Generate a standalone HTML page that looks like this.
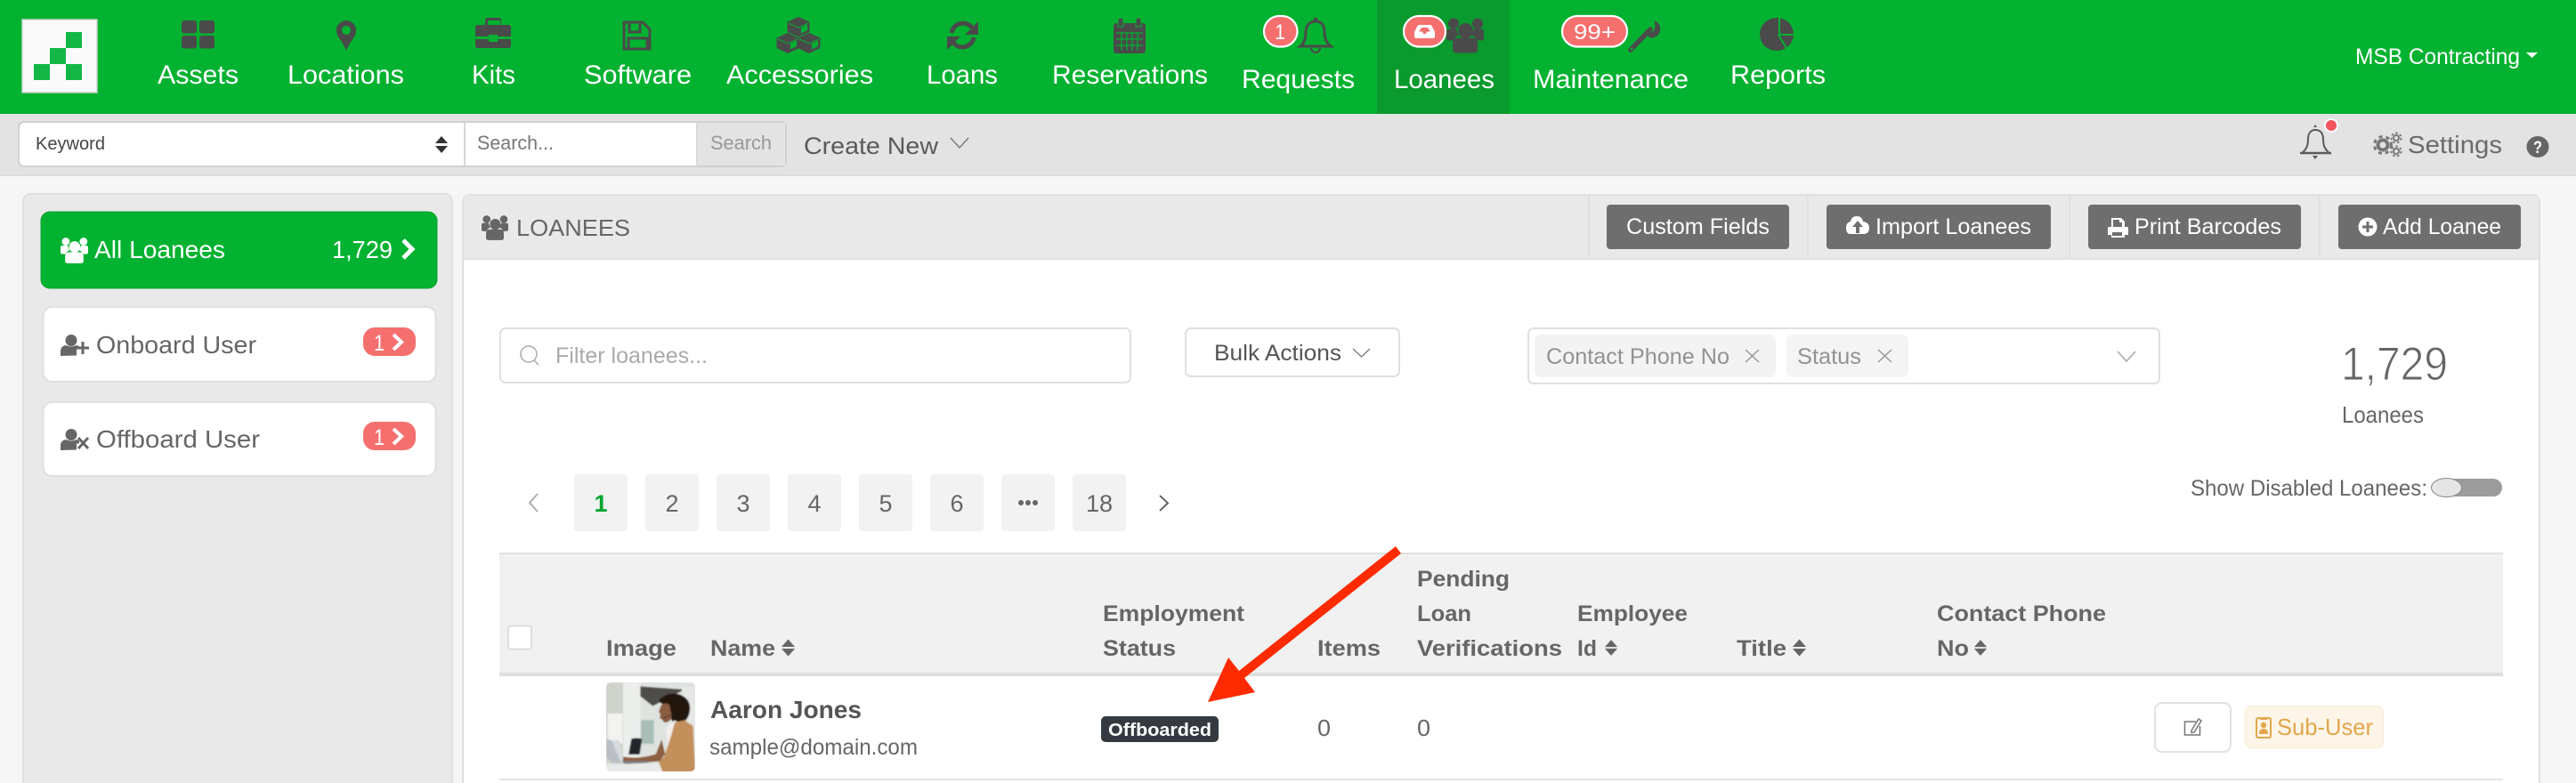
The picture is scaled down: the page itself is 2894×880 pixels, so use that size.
<!DOCTYPE html>
<html lang="en">
<head>
<meta charset="utf-8">
<title>Loanees</title>
<style>
html,body{margin:0;padding:0;width:2894px;height:880px;overflow:hidden;background:#f6f6f6}
svg{display:block}
text{font-family:"Liberation Sans",sans-serif}
.nav{fill:#fff;font-size:30px}
.th{fill:#666;font-size:25px;font-weight:bold}
.td{fill:#666;font-size:26px}
.btn{fill:#fff;font-size:25px}
.ic{fill:#4a4a4a}
.chev{fill:none;stroke:#777;stroke-width:1.4}
</style>
</head>
<body>
<svg xmlns="http://www.w3.org/2000/svg" width="2894" height="880" viewBox="0 0 2894 880">
<defs>
<symbol id="users" viewBox="0 0 42 39">
<circle cx="21.500" cy="14" r="8.500"/><circle cx="8" cy="6" r="6"/><circle cx="35" cy="6" r="6"/>
<path d="M0 15q0-3 3-3h8q1 4 3 7-5 2-6 6H3q-3 0-3-3zM42 15q0-3-3-3h-8q-1 4-3 7 5 2 6 6h5q3 0 3-3z"/>
<path d="M7 28q0-6 7-6h15q6 0 6 6v7q0 4-4 4H11q-4 0-4-4z"/>
</symbol>
<symbol id="sort" viewBox="0 0 18 20">
<path d="M9 0l8 9H1zM9 20L1 11h16z"/>
</symbol>
<symbol id="user" viewBox="0 0 32 24">
<circle cx="12" cy="6.500" r="6.500"/><path d="M0 24v-5q0-6 6-7 6 3 12 0 2 .5 3 1.500v3h-3v7z"/>
</symbol>
<clipPath id="ph"><rect x="15" y="15" width="300" height="300" rx="16"/></clipPath>
<filter id="bl"><feGaussianBlur stdDeviation="2"/></filter>
</defs>

<!-- page -->
<rect width="2894" height="880" fill="#f6f6f6"/>

<!-- top nav -->
<rect width="2894" height="128" fill="#02b230"/>
<rect x="1547" y="0" width="149" height="128" fill="#0a9a2e"/>

<rect x="25" y="22" width="84" height="82" fill="#fafafa" stroke="#c9d3c9" stroke-width="1.500"/>
<g fill="#14b746">
<rect x="74" y="36" width="18" height="18"/><rect x="56" y="54" width="18" height="18"/>
<rect x="38" y="72" width="18" height="18"/><rect x="74" y="72" width="18" height="18"/>
</g>

<!-- nav icons -->
<g class="ic">
<rect x="204" y="23" width="17" height="14.500" rx="3"/><rect x="224" y="23" width="17" height="14.500" rx="3"/>
<rect x="204" y="40" width="17" height="14.500" rx="3"/><rect x="224" y="40" width="17" height="14.500" rx="3"/>
<path fill-rule="evenodd" d="M389 57C385 46 378 42 378 34a11 11 0 0 1 22 0C400 42 393 46 389 57zM389 29a5 5 0 1 0 0 10 5 5 0 0 0 0-10z"/>
<path d="M534 31q0-3 3-3h8v-5q0-3 3-3h12q3 0 3 3v5h8q3 0 3 3v10h-15v-2h-10v2h-15zM548 23v5h14v-5zM534 44h15v3h10v-3h15v7q0 3-3 3h-34q-3 0-3-3z"/>
<path fill="none" stroke="#4a4a4a" stroke-width="3" d="M701 25h21l8 8v22h-29zM707 25v11h12V25M706 55V43h21v12"/>
<!-- cubes -->
<path d="M897 19l12.500 5.500v11.500l-12.500 5.500-12.500-5.500V24.500z"/>
<path d="M885 37l12 5.500 12-5.500 12.500 5.500v11.500L909 60l-12-5.500L885 60l-12.500-6V42.500z"/>
<path fill="#02b230" d="M900 31l7-3.500v6.500l-7 3.500zM888 49l7-3.500v6.500l-7 3.500zM912 49l7-3.500v6.500l-7 3.500z"/>
<path fill="none" stroke="#02b230" stroke-width="1" d="M886 26l11 5 11-5M874 44l11 5 11-5M898 44l11 5 11-5"/>
<!-- refresh -->
<path fill="none" stroke="#4a4a4a" stroke-width="5" d="M1069 37a13 13 0 0 1 23-6M1094 42a13 13 0 0 1-23 6"/>
<path d="M1099 24v15h-15zM1064 56V41h15z"/>
<!-- calendar -->
<rect x="1251" y="26" width="36" height="34" rx="3"/>
<path fill="#4a4a4a" stroke="#02b230" stroke-width="1" d="M1256 30v-7q0-3 3-3t3 3v7zM1276 30v-7q0-3 3-3t3 3v7z"/>
<path fill="none" stroke="#02b230" stroke-width="1.200" d="M1254 37h30M1254 44h30M1254 51h30M1260 37v20M1266 37v20M1272 37v20M1278 37v20"/>
<!-- bell -->
<path fill="none" stroke="#4a4a4a" stroke-width="3" d="M1461 52C1466 48 1467 42 1467 36C1467 28 1472 24 1478 24C1484 24 1488 28 1488 36C1488 42 1490 48 1495 52Z"/>
<circle cx="1478" cy="22" r="2.500"/><path fill="none" stroke="#4a4a4a" stroke-width="2" d="M1473 54a5 5 0 0 0 10 0"/>
<use href="#users" x="1625" y="20" width="42" height="40" fill="#4a4a4a"/>
<!-- wrench -->
<path fill="none" stroke="#4a4a4a" stroke-width="5.500" stroke-linecap="round" d="M1832 56l22-23"/>
<path d="M1858 23q8 3 7 11t-11 9l-5-6q6 1 9-3t0-11z"/>
<circle cx="1833" cy="55" r="1.300" fill="#02b230"/>
<!-- pie -->
<ellipse cx="1996" cy="38.500" rx="19" ry="18.500"/>
<path fill="none" stroke="#02b230" stroke-width="2" d="M1999 19v20h17M1998 39l10 17"/>
</g>

<!-- nav badges -->
<g fill="#f56f6f" stroke="#fff" stroke-width="2.200">
<rect x="1420" y="18" width="37.500" height="34.500" rx="17.200"/>
<rect x="1577" y="18" width="47" height="34.500" rx="17.200"/>
<rect x="1755" y="18" width="73" height="34.500" rx="17.200"/>
</g>
<text x="1432" y="44" fill="#fff" font-size="24" textLength="12" lengthAdjust="spacingAndGlyphs">1</text>
<path fill="#fff" fill-rule="evenodd" d="M1594 28h13q1 0 2 2l3 6v5q0 2-2 2h-19q-2 0-2-2v-5l3-6q1-2 2-2zM1597 31l-3 4.500h4l1 2.500h3l1-2.500h4l-3-4.500z"/>
<text x="1768" y="44" fill="#fff" font-size="24" textLength="47" lengthAdjust="spacingAndGlyphs">99+</text>

<!-- nav labels -->
<g class="nav">
<text x="177" y="94" textLength="91" lengthAdjust="spacingAndGlyphs">Assets</text>
<text x="323" y="94" textLength="131" lengthAdjust="spacingAndGlyphs">Locations</text>
<text x="530" y="94" textLength="49" lengthAdjust="spacingAndGlyphs">Kits</text>
<text x="656" y="94" textLength="121" lengthAdjust="spacingAndGlyphs">Software</text>
<text x="816" y="94" textLength="165" lengthAdjust="spacingAndGlyphs">Accessories</text>
<text x="1041" y="94" textLength="80" lengthAdjust="spacingAndGlyphs">Loans</text>
<text x="1182" y="94" textLength="175" lengthAdjust="spacingAndGlyphs">Reservations</text>
<text x="1395" y="99" textLength="127" lengthAdjust="spacingAndGlyphs">Requests</text>
<text x="1566" y="99" textLength="113" lengthAdjust="spacingAndGlyphs">Loanees</text>
<text x="1722" y="99" textLength="175" lengthAdjust="spacingAndGlyphs">Maintenance</text>
<text x="1944" y="94" textLength="107" lengthAdjust="spacingAndGlyphs">Reports</text>
</g>
<text x="2646" y="72" fill="#fff" font-size="25" textLength="185" lengthAdjust="spacingAndGlyphs">MSB Contracting</text>
<path fill="#fff" d="M2838 59h13l-6.500 6z"/>

<!-- toolbar -->
<rect y="128" width="2894" height="69" fill="#e3e3e3"/>
<rect y="196" width="2894" height="2" fill="#dcdcdc"/>
<rect x="21" y="137" width="862" height="50" rx="6" fill="#fff" stroke="#d0d0d0" stroke-width="2"/>
<rect x="784" y="138" width="98" height="48" fill="#e3e3e3"/>
<path stroke="#d4d8dc" stroke-width="2" d="M522 137v50M783 137v50"/>
<text x="40" y="168" fill="#444" font-size="20" textLength="78" lengthAdjust="spacingAndGlyphs">Keyword</text>
<path fill="#333" d="M496 153l7 8h-14zM496 172l-7-8h14z"/>
<text x="536" y="168" fill="#777" font-size="22" textLength="86" lengthAdjust="spacingAndGlyphs">Search...</text>
<text x="798" y="168" fill="#999" font-size="22" textLength="69" lengthAdjust="spacingAndGlyphs">Search</text>
<text x="903" y="173" fill="#5a5a5a" font-size="27" textLength="151" lengthAdjust="spacingAndGlyphs">Create New</text>
<path class="chev" d="M1068 155l10 11 10-11"/>

<path fill="none" stroke="#5a5a5a" stroke-width="2" d="M2587 171C2592 167 2593 162 2593 156C2593 149 2597 146 2601 146C2606 146 2610 149 2610 156C2610 162 2611 167 2616 171"/>
<path stroke="#5a5a5a" stroke-width="2.500" d="M2584 172h35"/>
<path fill="#5a5a5a" d="M2598 175h6l-3 4z"/><path fill="#5a5a5a" d="M2599 143l2-3 2 3z"/>
<circle cx="2619" cy="141" r="7" fill="#f2545b" stroke="#fff" stroke-width="2"/>
<g fill="none" stroke="#777">
<circle cx="2677" cy="163" r="5.500" stroke-width="4"/>
<circle cx="2677" cy="163" r="9.500" stroke-width="3" stroke-dasharray="4 4"/>
<circle cx="2692" cy="155" r="3" stroke-width="2"/>
<circle cx="2692" cy="155" r="5.500" stroke-width="2" stroke-dasharray="2.500 2.500"/>
<circle cx="2692" cy="170" r="3" stroke-width="2"/>
<circle cx="2692" cy="170" r="5.500" stroke-width="2" stroke-dasharray="2.500 2.500"/>
</g>
<text x="2705" y="172" fill="#6a6a6a" font-size="28" textLength="106" lengthAdjust="spacingAndGlyphs">Settings</text>
<ellipse cx="2851" cy="165" rx="12.500" ry="12" fill="#666"/>
<text x="2846" y="172" fill="#fff" font-size="19" font-weight="bold" textLength="10" lengthAdjust="spacingAndGlyphs">?</text>

<!-- sidebar -->
<rect x="26" y="218" width="482" height="700" rx="8" fill="#e9e9e9" stroke="#e0e0e0" stroke-width="2"/>
<rect x="46" y="238" width="445" height="86" rx="10" fill="#02b230" stroke="#0aa22f" stroke-width="1"/>
<rect x="48.500" y="345" width="441" height="84" rx="10" fill="#fff" stroke="#e0e0e0" stroke-width="2"/>
<rect x="48.500" y="452" width="441" height="83" rx="10" fill="#fff" stroke="#e0e0e0" stroke-width="2"/>
<use href="#users" x="68" y="267" width="31" height="29" fill="#fff"/>
<text x="106" y="290" fill="#fff" font-size="28" textLength="147" lengthAdjust="spacingAndGlyphs">All Loanees</text>
<text x="373" y="290" fill="#fff" font-size="28" textLength="68" lengthAdjust="spacingAndGlyphs">1,729</text>
<path fill="none" stroke="#fff" stroke-width="5" d="M453 270l10 10-10 10"/>

<use href="#user" x="68" y="376" width="32" height="24" fill="#666"/>
<path stroke="#666" stroke-width="3" d="M86 391h14M93 384v14"/>
<text x="108" y="397" fill="#666" font-size="28" textLength="180" lengthAdjust="spacingAndGlyphs">Onboard User</text>
<rect x="408" y="368" width="59" height="32" rx="13" fill="#f56f6f"/>
<text x="420" y="394" fill="#fff" font-size="25" textLength="12" lengthAdjust="spacingAndGlyphs">1</text>
<path fill="none" stroke="#fff" stroke-width="4" d="M442 376l9 8.500-9 8.500"/>

<use href="#user" x="68" y="482" width="32" height="24" fill="#666"/>
<path stroke="#666" stroke-width="3" d="M88 492l11 12M99 492l-11 12"/>
<text x="108" y="503" fill="#666" font-size="28" textLength="184" lengthAdjust="spacingAndGlyphs">Offboard User</text>
<rect x="408" y="474" width="59" height="32" rx="13" fill="#f56f6f"/>
<text x="420" y="500" fill="#fff" font-size="25" textLength="12" lengthAdjust="spacingAndGlyphs">1</text>
<path fill="none" stroke="#fff" stroke-width="4" d="M442 482l9 8.500-9 8.500"/>

<!-- main panel -->
<rect x="520" y="219" width="2333" height="700" rx="8" fill="#fff" stroke="#e0e0e0" stroke-width="2"/>
<path d="M521 291V227q0-7 7-7h2316q8 0 8 7v64z" fill="#e9e9e9"/>
<rect x="521" y="290" width="2331" height="2" fill="#e0e0e0"/>
<use href="#users" x="541" y="242" width="30" height="28" fill="#666"/>
<text x="580" y="265" fill="#666" font-size="26" textLength="128" lengthAdjust="spacingAndGlyphs">LOANEES</text>
<path stroke="#e0e0e0" stroke-width="2" d="M1785 220v70M2031 220v70M2325 220v70M2606 220v70"/>
<g fill="#6e6e6e">
<rect x="1805" y="230" width="205" height="50" rx="4"/>
<rect x="2052" y="230" width="252" height="50" rx="4"/>
<rect x="2346" y="230" width="239" height="50" rx="4"/>
<rect x="2627" y="230" width="205" height="50" rx="4"/>
</g>
<g class="btn">
<text x="1827" y="263" textLength="161" lengthAdjust="spacingAndGlyphs">Custom Fields</text>
<text x="2107" y="263" textLength="175" lengthAdjust="spacingAndGlyphs">Import Loanees</text>
<text x="2398" y="263" textLength="165" lengthAdjust="spacingAndGlyphs">Print Barcodes</text>
<text x="2677" y="263" textLength="133" lengthAdjust="spacingAndGlyphs">Add Loanee</text>
</g>
<path fill="#fff" d="M2074 256q0-6 5-7 1-6 7-6t7 6q7 1 7 7t-5 7h-16q-5 0-5-7z"/>
<path fill="#6e6e6e" d="M2087 248l6 7h-4v7h-4v-7h-4z"/>
<path fill="#fff" fill-rule="evenodd" d="M2372 245h11l4 4v6h3q1 0 1 1v8h-4v3h-15v-3h-4v-8q0-1 1-1h3zM2374 247v8h10v-5h-3v-3zM2373 261v4h11v-4z"/>
<circle cx="2660" cy="255" r="10.500" fill="#fff"/>
<path stroke="#6e6e6e" stroke-width="3" d="M2654 255h12M2660 249v12"/>

<!-- filter -->
<rect x="562" y="369" width="708" height="61" rx="6" fill="#fff" stroke="#e0e0e0" stroke-width="2"/>
<circle cx="594" cy="398" r="9" fill="none" stroke="#aaa" stroke-width="1.500"/>
<path stroke="#aaa" stroke-width="1.500" d="M600 405l5 5"/>
<text x="624" y="408" fill="#aaa" font-size="25" textLength="171" lengthAdjust="spacingAndGlyphs">Filter loanees...</text>

<rect x="1332" y="369" width="240" height="54" rx="6" fill="#fff" stroke="#e0e0e0" stroke-width="2"/>
<text x="1364" y="405" fill="#555" font-size="25" textLength="143" lengthAdjust="spacingAndGlyphs">Bulk Actions</text>
<path fill="none" stroke="#777" stroke-width="1.300" d="M1520 392l9.500 9 9.500-9"/>

<rect x="1717" y="369" width="709" height="62" rx="6" fill="#fff" stroke="#e0e0e0" stroke-width="2"/>
<rect x="1724" y="376" width="271" height="48" rx="7" fill="#f3f3f3"/>
<rect x="2007" y="376" width="137" height="48" rx="7" fill="#f3f4f3"/>
<text x="1737" y="409" fill="#929292" font-size="25" textLength="206" lengthAdjust="spacingAndGlyphs">Contact Phone No</text>
<path fill="none" stroke="#999" stroke-width="1.500" d="M1961 393l15 14M1976 393l-15 14"/>
<text x="2019" y="409" fill="#929292" font-size="25" textLength="72" lengthAdjust="spacingAndGlyphs">Status</text>
<path fill="none" stroke="#999" stroke-width="1.500" d="M2110 393l15 14M2125 393l-15 14"/>
<path fill="none" stroke="#aaa" stroke-width="1.600" d="M2379 395l10 11 10-11"/>

<text x="2630" y="427" fill="#666" stroke="#fff" stroke-width="1" font-size="53" textLength="120" lengthAdjust="spacingAndGlyphs">1,729</text>
<text x="2631" y="475" fill="#666" font-size="26" textLength="92" lengthAdjust="spacingAndGlyphs">Loanees</text>

<!-- pagination -->
<g fill="#f2f2f2">
<rect x="645" y="533" width="60" height="64" rx="4"/><rect x="725" y="533" width="60" height="64" rx="4"/>
<rect x="805" y="533" width="60" height="64" rx="4"/><rect x="885" y="533" width="60" height="64" rx="4"/>
<rect x="965" y="533" width="60" height="64" rx="4"/><rect x="1045" y="533" width="60" height="64" rx="4"/>
<rect x="1125" y="533" width="60" height="64" rx="4"/><rect x="1205" y="533" width="60" height="64" rx="4"/>
</g>
<path fill="none" stroke="#aaa" stroke-width="1.800" d="M604 555l-9 10 9 10"/>
<path fill="none" stroke="#555" stroke-width="1.800" d="M1303 557l9 8.500-9 8.500"/>
<g text-anchor="middle" fill="#666" font-size="27">
<text x="675" y="575" fill="#02a52e" font-weight="bold">1</text>
<text x="755" y="575">2</text><text x="835" y="575">3</text><text x="915" y="575">4</text><text x="995" y="575">5</text><text x="1075" y="575">6</text><text x="1235" y="575">18</text>
</g>
<g fill="#666"><circle cx="1147" cy="565" r="3"/><circle cx="1155" cy="565" r="3"/><circle cx="1163" cy="565" r="3"/></g>

<!-- toggle -->
<text x="2461" y="557" fill="#666" font-size="25" textLength="266" lengthAdjust="spacingAndGlyphs">Show Disabled Loanees:</text>
<rect x="2748" y="538" width="63" height="20" rx="10" fill="#9c9c9c"/>
<ellipse cx="2748.500" cy="548" rx="17" ry="10.500" fill="#e5e5e5" stroke="#888" stroke-width="1"/>

<!-- table -->
<rect x="561" y="621" width="2251" height="137" fill="#f1f1f1"/>
<rect x="561" y="621" width="2251" height="2" fill="#e0e0e0"/>
<rect x="561" y="756" width="2251" height="4" fill="#dedede"/>
<rect x="561" y="875" width="2251" height="2" fill="#e4e4e4"/>
<rect x="571" y="703.500" width="26" height="26" rx="3" fill="#fff" stroke="#ddd" stroke-width="2"/>
<g class="th">
<text x="681" y="737" textLength="79" lengthAdjust="spacingAndGlyphs">Image</text>
<text x="798" y="737" textLength="73" lengthAdjust="spacingAndGlyphs">Name</text>
<text x="1239" y="698" textLength="159" lengthAdjust="spacingAndGlyphs">Employment</text>
<text x="1239" y="737" textLength="82" lengthAdjust="spacingAndGlyphs">Status</text>
<text x="1480" y="737" textLength="71" lengthAdjust="spacingAndGlyphs">Items</text>
<text x="1592" y="659" textLength="104" lengthAdjust="spacingAndGlyphs">Pending</text>
<text x="1592" y="698" textLength="61" lengthAdjust="spacingAndGlyphs">Loan</text>
<text x="1592" y="737" textLength="163" lengthAdjust="spacingAndGlyphs">Verifications</text>
<text x="1772" y="698" textLength="124" lengthAdjust="spacingAndGlyphs">Employee</text>
<text x="1772" y="737" textLength="22" lengthAdjust="spacingAndGlyphs">Id</text>
<text x="1951" y="737" textLength="56" lengthAdjust="spacingAndGlyphs">Title</text>
<text x="2176" y="698" textLength="190" lengthAdjust="spacingAndGlyphs">Contact Phone</text>
<text x="2176" y="737" textLength="36" lengthAdjust="spacingAndGlyphs">No</text>
</g>
<g fill="#666">
<use href="#sort" x="877" y="718" width="17" height="20"/>
<use href="#sort" x="1802" y="718" width="16" height="20"/>
<use href="#sort" x="2013" y="718" width="17" height="20"/>
<use href="#sort" x="2217" y="718" width="16" height="20"/>
</g>

<!-- photo -->
<svg x="676" y="762" width="110" height="110" viewBox="0 0 330 330">
<g clip-path="url(#ph)"><g filter="url(#bl)">
<rect x="0" y="0" width="330" height="330" fill="#dfe3df"/>
<rect x="15" y="15" width="58" height="300" fill="#cfd3cc"/>
<rect x="20" y="120" width="50" height="100" fill="#f2f3f1"/>
<rect x="72" y="15" width="58" height="300" fill="#eceeec"/>
<path d="M130 28L270 38V44L172 95 130 62z" fill="#4f4e48"/>
<path d="M130 62L172 95 215 75V230H130z" fill="#dfe3df"/>
<rect x="132" y="142" width="44" height="80" fill="#a9bdb8"/>
<path d="M270 30h45v210h-25z" fill="#e6e8e6"/>
<path d="M90 258L100 205q14-6 36 0L128 258z" fill="#23262a"/>
<path d="M28 212l30-4 14 70-20 14z" fill="#d7dade"/>
<path d="M15 205l18 5 34 80-20 6-32-30z" fill="#b9bfc4"/>
<rect x="15" y="288" width="300" height="40" fill="#e9eaea"/>
<path d="M192 75q30-30 70-20 40 15 35 55-5 40-40 45-25-5-27-30-5-30-20-35-15-5-18-15z" fill="#241811"/>
<path d="M200 92q15-12 28-2l8 40q-5 20-25 20l-8-10-8-5 3-14-6-6z" fill="#8a5b40"/>
<path d="M206 136l36-14" stroke="#222" stroke-width="2" fill="none"/>
<path d="M218 165l28-22 20 10-46 95z" fill="#f1efeb"/>
<path d="M246 150l32-8 30 20 7 155H205l-15-40 20-10 25-75z" fill="#c38f5a"/>
<path d="M72 265q50 10 110-8l20-50 12 50-20 24q-60 6-122 6z" fill="#8f5f42"/>
<path d="M68 280l90 0v6l-80 4z" fill="#7d8388"/>
</g></g>
</svg>

<text x="798" y="807" fill="#555" font-size="28" font-weight="bold" textLength="170" lengthAdjust="spacingAndGlyphs">Aaron Jones</text>
<text x="797" y="848" fill="#666" font-size="25" textLength="234" lengthAdjust="spacingAndGlyphs">sample@domain.com</text>
<rect x="1237" y="805" width="132" height="29" rx="5" fill="#343a40"/>
<text x="1245" y="827" fill="#fff" font-size="20" font-weight="bold" textLength="116" lengthAdjust="spacingAndGlyphs">Offboarded</text>
<text x="1480" y="827" class="td" textLength="15" lengthAdjust="spacingAndGlyphs">0</text>
<text x="1592" y="827" class="td" textLength="15" lengthAdjust="spacingAndGlyphs">0</text>

<rect x="2421" y="790" width="85" height="55" rx="8" fill="#fff" stroke="#dfe1e3" stroke-width="2"/>
<path fill="none" stroke="#777" stroke-width="1.500" d="M2467 811h-12.500v15h17v-10"/>
<path fill="none" stroke="#777" stroke-width="1.500" d="M2462 821l8-13 3 2-8 13-3 .5z"/>
<rect x="2522.500" y="793.500" width="155" height="47" rx="7" fill="#fdf5e7" stroke="#f8efdd" stroke-width="1.500"/>
<rect x="2535" y="807" width="16" height="22" rx="2" fill="none" stroke="#e2a64c" stroke-width="2"/>
<path fill="#e2a64c" d="M2539 806h8v3h-8z"/><circle cx="2543" cy="815" r="3.200" fill="#e2a64c"/>
<path fill="#e2a64c" d="M2538 825q0-6 5-6t5 6z"/>
<text x="2558" y="826" fill="#e2a64c" font-size="26" textLength="108" lengthAdjust="spacingAndGlyphs">Sub-User</text>

<!-- annotation arrow -->
<path fill="#ff2b00" d="M1568 614L1574 622 1398 762 1410 778 1357 789 1380 739 1392 754z"/>
</svg>
</body>
</html>
